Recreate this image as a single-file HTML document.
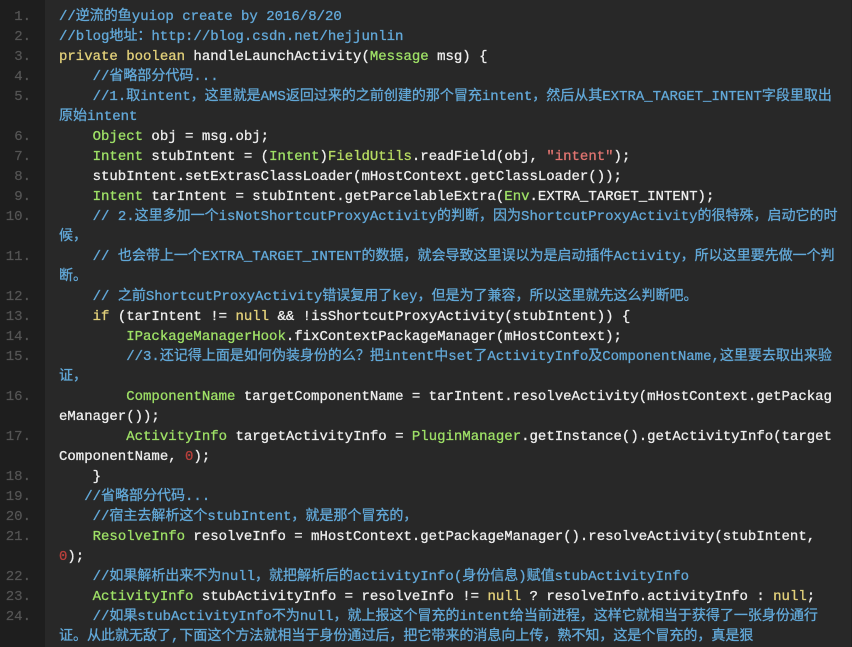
<!DOCTYPE html>
<html><head><meta charset="utf-8">
<style>
html,body{margin:0;padding:0;background:#282828;}
body{width:852px;height:647px;overflow:hidden;position:relative;}
#g{position:absolute;left:0;top:0;width:45px;height:647px;background:#1e1e1e;}
#e{position:absolute;right:0;top:0;width:1px;height:647px;background:#222;}
pre{margin:0;position:absolute;top:7px;font:14px/20px "Liberation Mono","Noto Sans CJK SC",monospace;white-space:pre;color:#eeeeee;-webkit-text-stroke:.3px currentColor;}
#n{left:0;width:31px;text-align:right;color:#555555;-webkit-text-stroke:.2px currentColor;}
#c{left:59px;}
i{font-style:normal;color:#62a8d8}
b{font-weight:normal;color:#e2d07a}
u{text-decoration:none;color:#9ee066}
u.y{color:#b8dc62}
s{text-decoration:none;color:#e07470}
em{font-style:normal;color:#b8403c}
</style></head><body>
<div id="g"></div><div id="e"></div>
<pre id="n">1.
2.
3.
4.
5.

6.
7.
8.
9.
10.

11.

12.
13.
14.
15.

16.

17.

18.
19.
20.
21.

22.
23.
24.</pre>
<pre id="c"><i>//逆流的鱼yuiop create by 2016/8/20</i>
<i>//blog地址：http://blog.csdn.net/hejjunlin</i>
<b>private boolean</b> handleLaunchActivity(<u>Message</u> msg) {
    <i>//省略部分代码...</i>
    <i>//1.取intent，这里就是AMS返回过来的之前创建的那个冒充intent，然后从其EXTRA_TARGET_INTENT字段里取出</i>
<i>原始intent</i>
    <u>Object</u> obj = msg.obj;
    <u>Intent</u> stubIntent = (<u>Intent</u>)<u class="y">FieldUtils</u>.readField(obj, <s>"intent"</s>);
    stubIntent.setExtrasClassLoader(mHostContext.getClassLoader());
    <u>Intent</u> tarIntent = stubIntent.getParcelableExtra(<u>Env</u>.EXTRA_TARGET_INTENT);
    <i>// 2.这里多加一个isNotShortcutProxyActivity的判断，因为ShortcutProxyActivity的很特殊，启动它的时</i>
<i>候，</i>
    <i>// 也会带上一个EXTRA_TARGET_INTENT的数据，就会导致这里误以为是启动插件Activity，所以这里要先做一个判</i>
<i>断。</i>
    <i>// 之前ShortcutProxyActivity错误复用了key，但是为了兼容，所以这里就先这么判断吧。</i>
    <b>if</b> (tarIntent != <b>null</b> &amp;&amp; !isShortcutProxyActivity(stubIntent)) {
        <u>IPackageManagerHook</u>.fixContextPackageManager(mHostContext);
        <i>//3.还记得上面是如何伪装身份的么？把intent中set了ActivityInfo及ComponentName,这里要去取出来验</i>
<i>证，</i>
        <u>ComponentName</u> targetComponentName = tarIntent.resolveActivity(mHostContext.getPackag
eManager());
        <u>ActivityInfo</u> targetActivityInfo = <u>PluginManager</u>.getInstance().getActivityInfo(target
ComponentName, <em>0</em>);
    }
   <i>//省略部分代码...</i>
    <i>//宿主去解析这个stubIntent，就是那个冒充的，</i>
    <u>ResolveInfo</u> resolveInfo = mHostContext.getPackageManager().resolveActivity(stubIntent,
<em>0</em>);
    <i>//如果解析出来不为null，就把解析后的activityInfo(身份信息)赋值stubActivityInfo</i>
    <u>ActivityInfo</u> stubActivityInfo = resolveInfo != <b>null</b> ? resolveInfo.activityInfo : <b>null</b>;
    <i>//如果stubActivityInfo不为null，就上报这个冒充的intent给当前进程，这样它就相当于获得了一张身份通行</i>
<i>证。从此就无敌了,下面这个方法就相当于身份通过后，把它带来的消息向上传，熟不知，这是个冒充的，真是狠</i></pre>
</body></html>
